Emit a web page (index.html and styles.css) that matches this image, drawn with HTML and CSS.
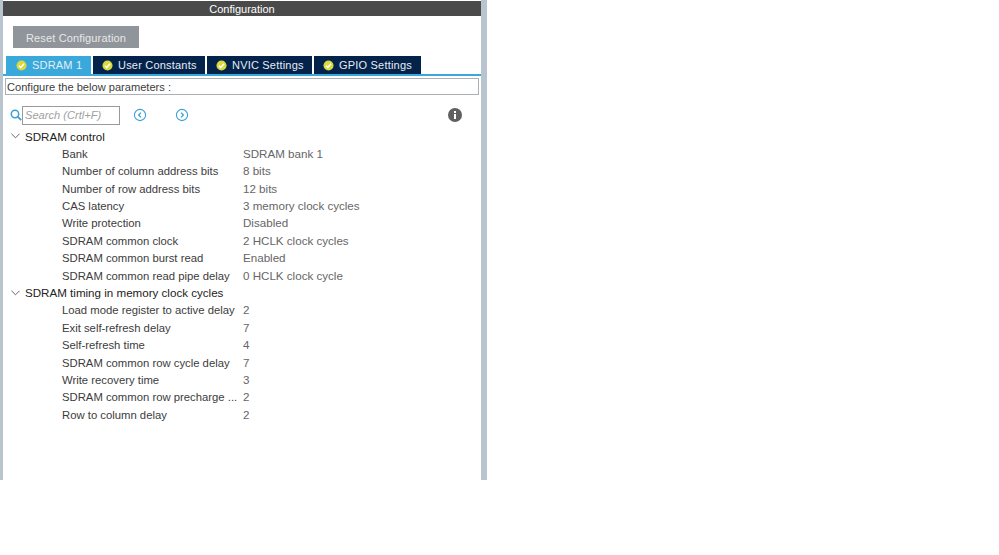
FILE: index.html
```html
<!DOCTYPE html>
<html lang="en">
<head>
    <meta charset="UTF-8">
    <title>Configuration</title>
    <link rel="stylesheet" href="styles.css">
</head>
<body>
    <div class="panel">
        <div class="title">Configuration</div>
        <div class="toolbar">
            <button class="reset-btn">Reset Configuration</button>
        </div>
        <div class="tabs">
            <div class="tab active tab-sdram"><svg class="check" viewBox="0 0 12 12"><circle cx="6" cy="6" r="5.5" fill="#d9da3e"/><path d="M3.2 6.2l2 2 3.6-4" fill="none" stroke="#fff" stroke-width="1.6"/></svg>SDRAM 1</div>
            <div class="tab tab-user"><svg class="check" viewBox="0 0 12 12"><circle cx="6" cy="6" r="5.5" fill="#d9da3e"/><path d="M3.2 6.2l2 2 3.6-4" fill="none" stroke="#fff" stroke-width="1.6"/></svg>User Constants</div>
            <div class="tab tab-nvic"><svg class="check" viewBox="0 0 12 12"><circle cx="6" cy="6" r="5.5" fill="#d9da3e"/><path d="M3.2 6.2l2 2 3.6-4" fill="none" stroke="#fff" stroke-width="1.6"/></svg>NVIC Settings</div>
            <div class="tab tab-gpio"><svg class="check" viewBox="0 0 12 12"><circle cx="6" cy="6" r="5.5" fill="#d9da3e"/><path d="M3.2 6.2l2 2 3.6-4" fill="none" stroke="#fff" stroke-width="1.6"/></svg>GPIO Settings</div>
        </div>
        <div class="hint">Configure the below parameters :</div>
        <div class="search-row">
            <svg class="search-icon" viewBox="0 0 12 12"><circle cx="5" cy="5" r="3.7" fill="none" stroke="#3a9fd8" stroke-width="1.5"/><path d="M7.6 7.6l3.6 3.6" stroke="#3a9fd8" stroke-width="1.8"/></svg>
            <div class="search-box">Search (Crtl+F)</div>
            <svg class="nav-icon" viewBox="0 0 14 14"><circle cx="7" cy="7" r="5.6" fill="none" stroke="#3a9fd8" stroke-width="1.1"/><path d="M8 4.6L5.6 7 8 9.4" fill="none" stroke="#3a9fd8" stroke-width="1.3"/></svg>
            <svg class="nav-icon next" viewBox="0 0 14 14"><circle cx="7" cy="7" r="5.6" fill="none" stroke="#3a9fd8" stroke-width="1.1"/><path d="M6 4.6L8.4 7 6 9.4" fill="none" stroke="#3a9fd8" stroke-width="1.3"/></svg>
            <svg class="info-icon" viewBox="0 0 14 14"><circle cx="7" cy="7" r="7" fill="#5f5f5f"/><rect x="6" y="6" width="2" height="5" fill="#fff"/><rect x="6" y="3" width="2" height="2" fill="#fff"/></svg>
        </div>
        <div class="tree">
            <div class="group"><svg class="chevron" viewBox="0 0 10 6"><path d="M.5.5L5 5 9.5.5" fill="none" stroke="#555"/></svg>SDRAM control</div>
            <div class="row"><span class="name">Bank</span><span class="value">SDRAM bank 1</span></div>
            <div class="row"><span class="name">Number of column address bits</span><span class="value">8 bits</span></div>
            <div class="row"><span class="name">Number of row address bits</span><span class="value">12 bits</span></div>
            <div class="row"><span class="name">CAS latency</span><span class="value">3 memory clock cycles</span></div>
            <div class="row"><span class="name">Write protection</span><span class="value">Disabled</span></div>
            <div class="row"><span class="name">SDRAM common clock</span><span class="value">2 HCLK clock cycles</span></div>
            <div class="row"><span class="name">SDRAM common burst read</span><span class="value">Enabled</span></div>
            <div class="row"><span class="name">SDRAM common read pipe delay</span><span class="value">0 HCLK clock cycle</span></div>
            <div class="group"><svg class="chevron" viewBox="0 0 10 6"><path d="M.5.5L5 5 9.5.5" fill="none" stroke="#555"/></svg>SDRAM timing in memory clock cycles</div>
            <div class="row"><span class="name">Load mode register to active delay</span><span class="value">2</span></div>
            <div class="row"><span class="name">Exit self-refresh delay</span><span class="value">7</span></div>
            <div class="row"><span class="name">Self-refresh time</span><span class="value">4</span></div>
            <div class="row"><span class="name">SDRAM common row cycle delay</span><span class="value">7</span></div>
            <div class="row"><span class="name">Write recovery time</span><span class="value">3</span></div>
            <div class="row"><span class="name">SDRAM common row precharge ...</span><span class="value">2</span></div>
            <div class="row"><span class="name">Row to column delay</span><span class="value">2</span></div>
        </div>
    </div>
</body>
</html>
```

FILE: styles.css
```css
body {
    margin: 0;
    background: white;
    font-family: "Liberation Sans", Arial, sans-serif;
    font-size: 11.3px;
    color: #3c3c3c;
}

.panel {
    box-sizing: border-box;
    width: 487px;
    height: 480px;
    padding-top: 1px;
    background: white;
    border-left: 3px solid #b8c4ce;
    border-right: 6px solid #b8c4ce;
}

.title {
    height: 15px;
    line-height: 16px;
    text-align: center;
    font-size: 11px;
    color: white;
    background-color: #4a4a4a;
}

.toolbar {
    padding: 10px 0 0 10px;
}

.reset-btn {
    display: block;
    width: 126px;
    height: 22px;
    padding: 2px 0 0;
    border: none;
    font-family: inherit;
    font-size: 11px;
    letter-spacing: 0.15px;
    color: #e8e8e8;
    background-color: #8f959b;
}

.tabs {
    display: flex;
    gap: 2px;
    height: 18px;
    margin-top: 8px;
    padding-left: 3px;
    border-bottom: 2px solid #39a9dc;
}

.tab {
    box-sizing: border-box;
    display: flex;
    align-items: center;
    gap: 5px;
    padding-left: 9px;
    white-space: nowrap;
    font-size: 11px;
    letter-spacing: 0.2px;
    color: #e8ecf2;
    background-color: #03234b;
}

.tab.active {
    background-color: #39a9dc;
}

.tab-sdram {
    width: 85px;
    padding-left: 10px;
}

.tab-user {
    width: 112px;
}

.tab-nvic {
    width: 105px;
}

.tab-gpio {
    width: 107px;
}

.check {
    width: 11px;
    height: 11px;
}

.hint {
    box-sizing: border-box;
    height: 17px;
    margin: 2px 2px 0 2px;
    padding-left: 1px;
    line-height: 16px;
    font-size: 11.1px;
    border: 1px solid #a9b0b6;
}

.search-row {
    display: flex;
    align-items: center;
    height: 20px;
    margin-top: 10px;
    padding-left: 7px;
}

.search-icon {
    width: 12px;
    height: 12px;
}

.search-box {
    box-sizing: border-box;
    width: 98px;
    height: 19px;
    padding-left: 2px;
    line-height: 17px;
    font-size: 11.1px;
    font-style: italic;
    color: #a0a0a0;
    border: 1px solid #9a9a9a;
}

.nav-icon {
    width: 14px;
    height: 14px;
    margin-left: 13px;
}

.nav-icon.next {
    margin-left: 28px;
}

.info-icon {
    width: 14px;
    height: 14px;
    margin-left: 259px;
}

.tree {
    margin-top: 2.5px;
}

.group,
.row {
    display: flex;
    height: 17.4px;
    line-height: 17.4px;
    white-space: nowrap;
}

.group {
    align-items: center;
    padding-left: 8px;
    font-size: 11.6px;
    color: #222;
}

.chevron {
    width: 9px;
    height: 6px;
    margin-right: 5px;
}

.row {
    align-items: baseline;
    padding-left: 59px;
}

.name {
    width: 181px;
}

.value {
    font-size: 11.6px;
    color: #666;
}
```
